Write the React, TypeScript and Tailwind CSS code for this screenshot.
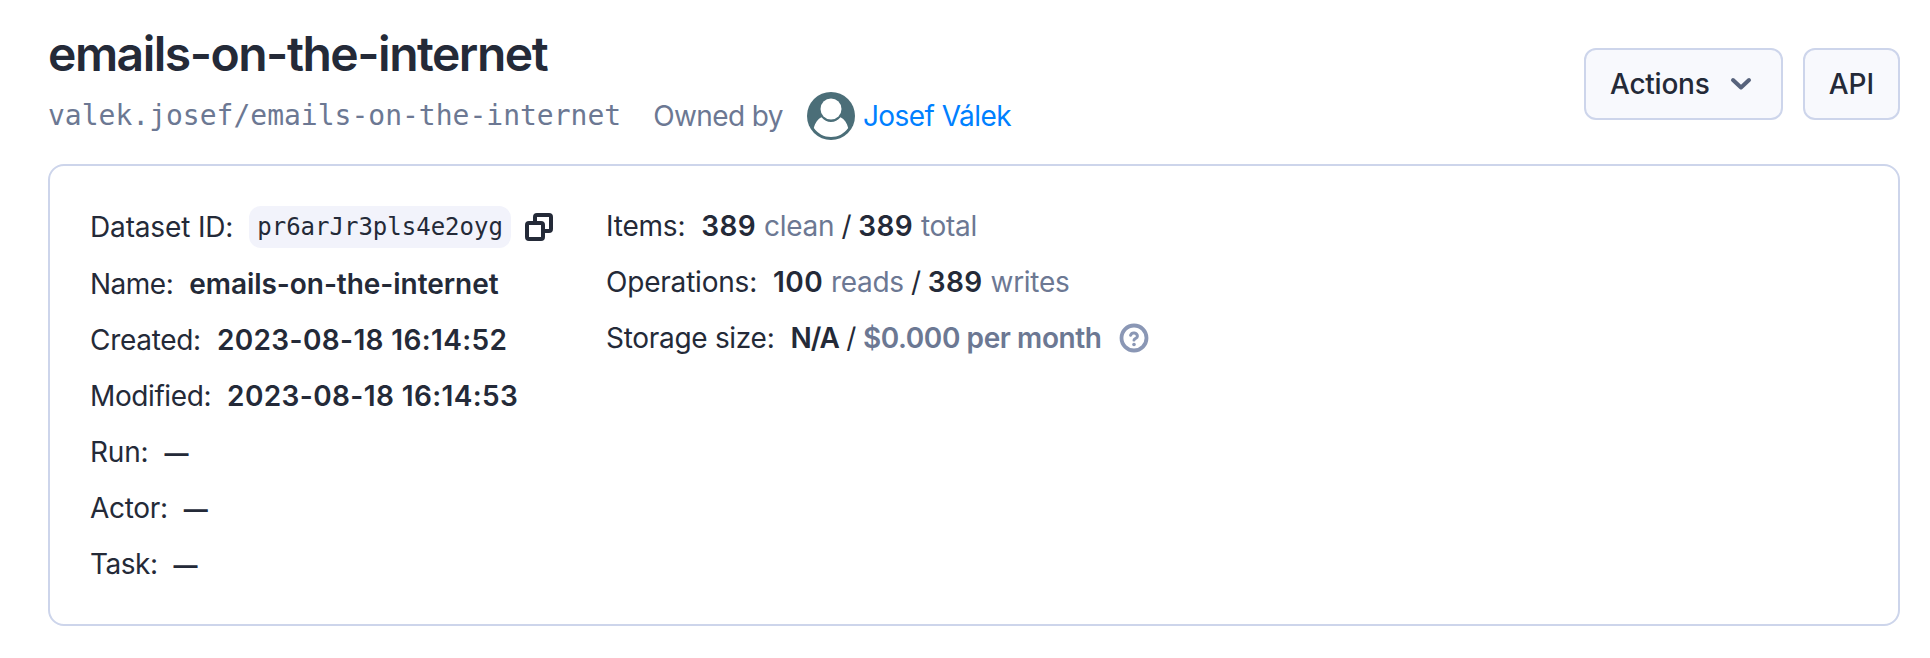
import type { ReactNode } from 'react';

function Row({ label, tracking = 'tracking-[-0.2px]', children }: { label: string; tracking?: string; children: ReactNode }) {
  return (
    <div className="flex min-h-10 items-center">
      <span className={`mr-4 whitespace-pre ${tracking}`}>{label}:</span>
      {children}
    </div>
  );
}

function Muted({ children }: { children: ReactNode }) {
  return <span className="tracking-[-0.3px] text-[#6c7893]">{children}</span>;
}

function Count({ children }: { children: ReactNode }) {
  return <b className="font-semibold tracking-[0.4px]">{children}</b>;
}

function Slash() {
  return <span className="tracking-[-0.6px]"> / </span>;
}

function Dash() {
  return <b className="pt-[3px] text-[24px] leading-8 font-bold">—</b>;
}

function CopyIcon() {
  return (
    <svg className="ml-[14px]" width="28" height="28" viewBox="0 0 28 28" fill="none" stroke="#242a38" strokeWidth="4" strokeLinejoin="round" strokeLinecap="round">
      <rect x="2" y="10" width="16" height="16" rx="2" />
      <path d="M10 9.5V4a2 2 0 0 1 2-2h12a2 2 0 0 1 2 2v12a2 2 0 0 1-2 2H19" />
    </svg>
  );
}

function HelpIcon() {
  return (
    <svg className="ml-[17px]" width="30" height="30" viewBox="0 0 30 30" fill="none" stroke="#8a97b5" strokeLinecap="round" strokeLinejoin="round">
      <circle cx="15" cy="15" r="12.5" strokeWidth="3.8" />
      <path d="M11.6 12.3a3.5 3.500 0 0 1 6.800 .9c0 2.200-3.200 2.400-3.400 3.900" strokeWidth="3" />
      <circle cx="15" cy="21.500" r="1.8" fill="#8a97b5" stroke="none" />
    </svg>
  );
}

function Avatar() {
  return (
    <svg className="ml-6 mr-2" width="48" height="48" viewBox="0 0 48 48">
      <circle cx="24" cy="24" r="24" fill="#4b6e78" />
      <path d="M6.8 36C8.2 31 10.500 27 14.500 25.200C17 28.200 20.300 30 24 30C27.700 30 31 28.200 33.500 25.200C37.500 27 40 31 41.200 36C37.200 41.700 31 45 24 45C17 45 10.800 41.700 6.800 36Z" fill="#fff" />
      <circle cx="24" cy="17" r="10.500" fill="#fff" />
    </svg>
  );
}

export default function App() {
  return (
    <div className="flex min-h-[658px] flex-col bg-white pl-12 pr-[30px] pt-6 font-['Inter',sans-serif] text-[28px] leading-10 text-[#242a38]">
      <header className="flex h-[140px] items-start justify-between">
        <div>
          <h1 className="h-[60px] text-[48px] leading-[60px] font-semibold tracking-[-1.5px]">emails-on-the-internet</h1>
          <div className="mt-2 flex h-12 items-center text-[#6c7893]">
            <span className="font-['DejaVu_Sans_Mono',monospace] text-[28px]">valek.josef/emails-on-the-internet</span>
            <span className="ml-8 tracking-[-0.6px]">Owned by</span>
            <Avatar />
            <a className="tracking-[-0.55px] text-[#0080ff]">Josef Válek</a>
          </div>
        </div>
        <div className="mt-6 flex gap-5 font-medium">
          <button className="flex h-[72px] w-[199px] items-center rounded-xl border-2 border-[#cdd5eb] bg-[#f8f9fd] pl-6 tracking-[-0.25px]">
            Actions
            <svg className="ml-[21px]" width="22" height="14" viewBox="0 0 22 14" fill="none" stroke="#57637c" strokeWidth="4" strokeLinecap="round" strokeLinejoin="round">
              <path d="M3 3l8 7.500L19 3" />
            </svg>
          </button>
          <button className="h-[72px] w-[97px] rounded-xl border-2 border-[#cdd5eb] bg-[#f8f9fd]">API</button>
        </div>
      </header>
      <main className="flex h-[462px] rounded-2xl border-2 border-[#cdd5eb] pl-10 pt-10">
        <section className="flex w-[516px] flex-col gap-4">
          <Row label="Dataset ID" tracking="tracking-[-0.15px]">
            <code className="flex h-[42px] items-center rounded-xl bg-[#f2f3fb] px-2 font-['DejaVu_Sans_Mono',monospace] text-[24px]">pr6arJr3pls4e2oyg</code>
            <CopyIcon />
          </Row>
          <Row label="Name" tracking="tracking-[-0.5px]"><b className="font-semibold tracking-[-0.05px]">emails-on-the-internet</b></Row>
          <Row label="Created" tracking="tracking-[-0.3px]"><b className="font-semibold tracking-[0.36px]">2023-08-18 16:14:52</b></Row>
          <Row label="Modified" tracking="tracking-[-0.4px]"><b className="font-semibold tracking-[0.38px]">2023-08-18 16:14:53</b></Row>
          <Row label="Run"><Dash /></Row>
          <Row label="Actor" tracking="tracking-[-0.3px]"><Dash /></Row>
          <Row label="Task" tracking="tracking-[-0.5px]"><Dash /></Row>
        </section>
        <section className="flex flex-col gap-4">
          <Row label="Items">
            <span><Count>389</Count> <Muted>clean</Muted><Slash /><Count>389</Count> <Muted>total</Muted></span>
          </Row>
          <Row label="Operations">
            <span><Count>100</Count> <Muted>reads</Muted><Slash /><Count>389</Count> <Muted>writes</Muted></span>
          </Row>
          <Row label="Storage size" tracking="tracking-[-0.3px]">
            <span><b className="font-semibold tracking-[-1px]">N/A</b><Slash /><b className="font-semibold tracking-[-0.42px] text-[#6c7893]">$0.000 per month</b></span>
            <HelpIcon />
          </Row>
        </section>
      </main>
    </div>
  );
}
